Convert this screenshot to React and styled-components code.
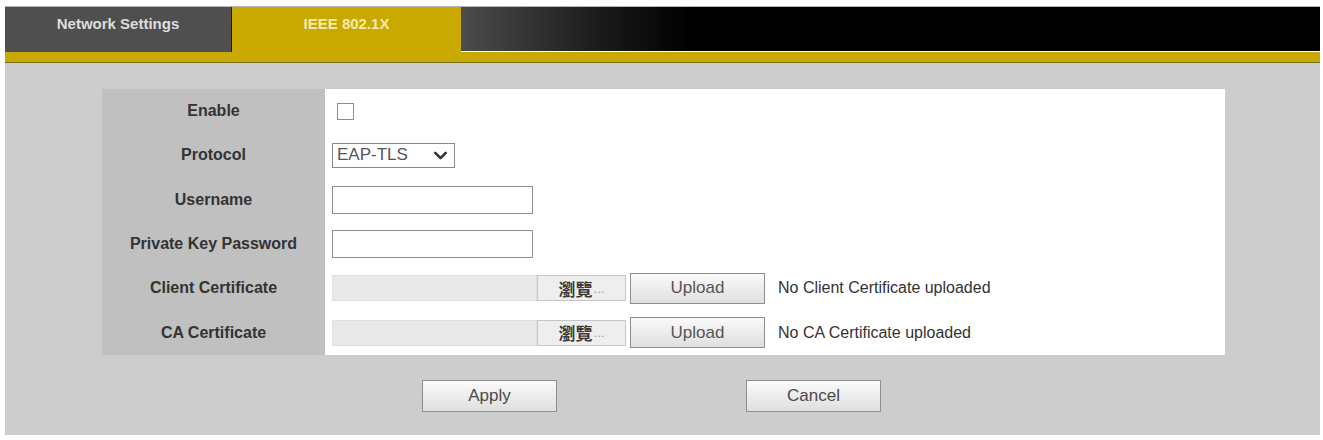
import { Fragment } from 'react';
import styled, { createGlobalStyle } from 'styled-components';
import { ChevronDown } from 'lucide-react';

const GlobalStyle = createGlobalStyle`
  body {
    margin: 0;
    background: #ffffff;
    font-family: "Liberation Sans", Arial, sans-serif;
  }
`

const Page = styled.div`
  padding: 6px 3px 5px 5px;
`

const TabBar = styled.div`
  display: flex;
  height: 45px;
  border-top: 1px solid #b5b5b5;
`

const Tab = styled.div`
  width: ${p => p.width}px;
  box-sizing: border-box;
  padding-top: 8px;
  text-align: center;
  font-size: 15px;
  line-height: 18px;
  font-weight: bold;
  background: ${p => (p.active ? '#c9a900' : '#4f4f4f')};
  color: ${p => (p.active ? '#f6eaa6' : '#dedede')};
  border-right: ${p => (p.active ? 'none' : '1px solid #1e1e1e')};
`

const TabFill = styled.div`
  flex: 1;
  margin-bottom: 1px;
  background: linear-gradient(90deg, #4c4c4c 0px, #1a1a1a 140px, #000000 230px);
`

const GoldStrip = styled.div`
  height: 10px;
  background: #c9a900;
  border-bottom: 1px solid #76721e;
`

const Content = styled.div`
  background: #cdcdcd;
  padding: 26px 0 23px 97px;
`

const FormGrid = styled.div`
  display: grid;
  width: 1123px;
  height: 266px;
  grid-template-columns: 223px 1fr;
  grid-template-rows: repeat(6, 1fr);
`

const Label = styled.div`
  background: #c0c0c0;
  display: flex;
  align-items: center;
  justify-content: center;
  font-size: 16px;
  font-weight: bold;
  color: #333333;
`

const Value = styled.div`
  background: #ffffff;
  display: flex;
  align-items: center;
  padding-left: 7px;
`

const Checkbox = styled.input`
  appearance: none;
  width: 17px;
  height: 17px;
  margin: 0 0 0 5px;
  border: 1px solid #8c8c8c;
  background: #fff;
`

const SelectBox = styled.div`
  width: 123px;
  height: 25px;
  box-sizing: border-box;
  border: 1px solid #8a8a8a;
  display: flex;
  align-items: center;
  justify-content: space-between;
  padding: 0 3px 0 4px;
  font-size: 17px;
  color: #555555;
`

const TextInput = styled.input`
  width: 201px;
  height: 28px;
  box-sizing: border-box;
  border: 1px solid #909090;
  margin: 0;
  background: #fff;
`

const FileField = styled.div`
  width: 205px;
  height: 26px;
  box-sizing: border-box;
  background: #e9e9e9;
  border: 1px solid #e0e0e0;
`

const Browse = styled.div`
  width: 89px;
  height: 26px;
  box-sizing: border-box;
  background: #eeeeee;
  border: 1px solid #c6c6c6;
  display: flex;
  align-items: center;
  justify-content: center;
  font-family: "Noto Sans CJK TC", "Liberation Sans", sans-serif;
  font-size: 17px;
  font-weight: bold;
  color: #3a3a3a;

  span {
    color: #999999;
    font-family: "Liberation Sans", sans-serif;
    font-weight: normal;
    font-size: 13px;
    margin-left: 1px;
  }
`

const Button = styled.button`
  width: 135px;
  height: ${p => p.h || 32}px;
  margin: 0;
  padding: 0;
  border: 1px solid #8e8e8e;
  background: linear-gradient(#fafafa, #dfdfdf);
  font-family: "Liberation Sans", Arial, sans-serif;
  font-size: 17px;
  color: #4a4a4a;
`

const UploadButton = styled(Button)`
  margin-left: 4px;
  color: #555555;
`

const Note = styled.span`
  margin-left: 13px;
  font-size: 16px;
  color: #333333;
`

const Actions = styled.div`
  width: 1123px;
  box-sizing: border-box;
  display: flex;
  justify-content: center;
  gap: 189px;
  margin-top: 25px;
  padding-right: 24px;
`

function FileRow({ note }) {
  return (
    <>
      <FileField />
      <Browse>瀏覽<span>...</span></Browse>
      <UploadButton h={31}>Upload</UploadButton>
      <Note>{note}</Note>
    </>
  )
}

const rows = [
  { label: 'Enable', field: <Checkbox type="checkbox" /> },
  {
    label: 'Protocol',
    field: (
      <SelectBox>
        EAP-TLS
        <ChevronDown size={21} strokeWidth={3} color="#333" />
      </SelectBox>
    ),
  },
  { label: 'Username', field: <TextInput type="text" /> },
  { label: 'Private Key Password', field: <TextInput type="password" /> },
  { label: 'Client Certificate', field: <FileRow note="No Client Certificate uploaded" /> },
  { label: 'CA Certificate', field: <FileRow note="No CA Certificate uploaded" /> },
]

function App() {
  return (
    <>
      <GlobalStyle />
      <Page>
        <TabBar>
          <Tab width={227}>Network Settings</Tab>
          <Tab width={229} active>IEEE 802.1X</Tab>
          <TabFill />
        </TabBar>
        <GoldStrip />
        <Content>
          <FormGrid>
            {rows.map(r => (
              <Fragment key={r.label}>
                <Label>{r.label}</Label>
                <Value>{r.field}</Value>
              </Fragment>
            ))}
          </FormGrid>
          <Actions>
            <Button>Apply</Button>
            <Button>Cancel</Button>
          </Actions>
        </Content>
      </Page>
    </>
  );
}

export default App;
